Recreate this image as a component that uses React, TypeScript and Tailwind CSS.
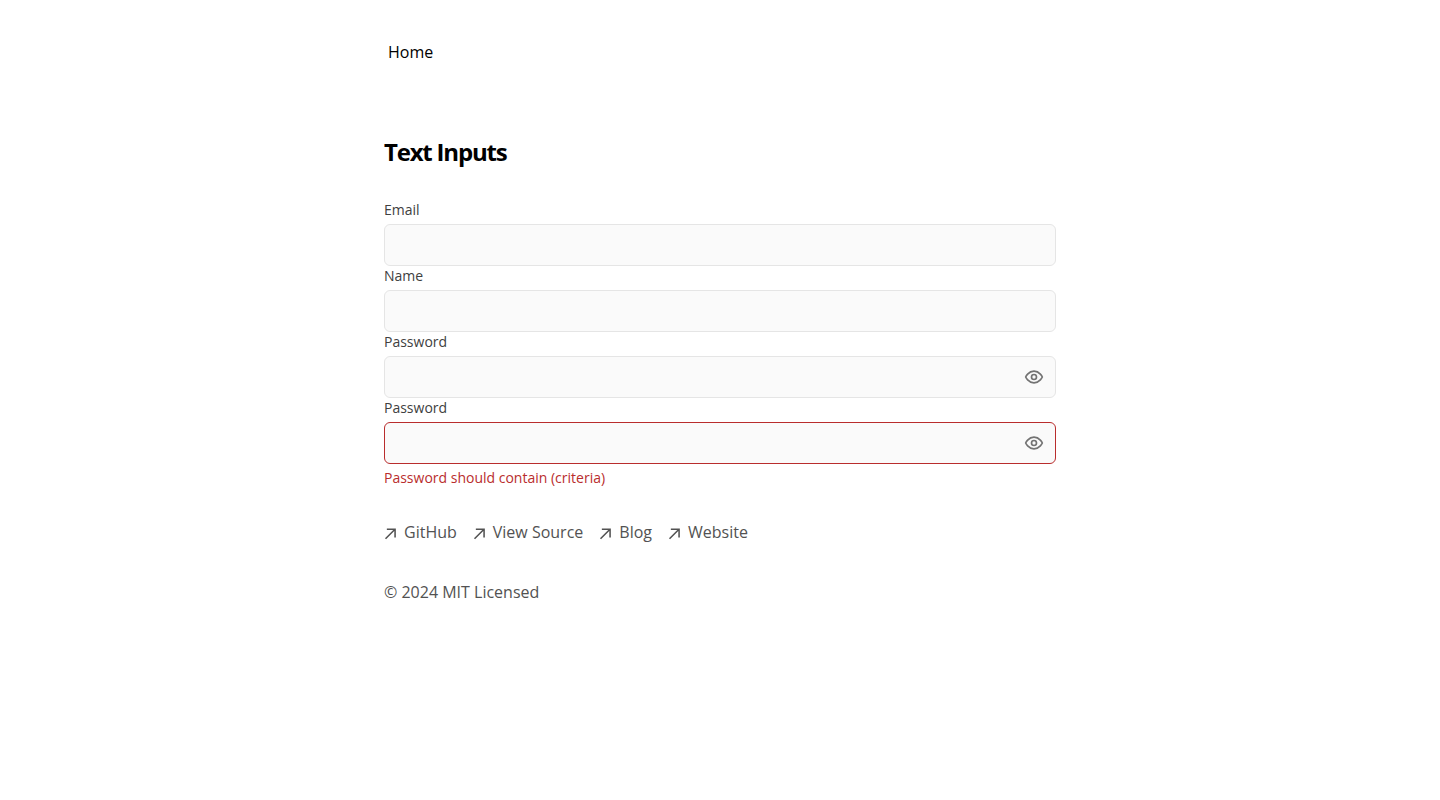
import React from 'react';

interface TextInputProps {
  id: string;
  label: string;
  type?: 'text' | 'email' | 'password';
  error?: string;
}

const links = [
  { label: 'GitHub', href: '#github' },
  { label: 'View Source', href: '#source' },
  { label: 'Blog', href: '#blog' },
  { label: 'Website', href: '#website' },
];

const ArrowIcon: React.FC = () => (
  <svg width="12" height="12" viewBox="0 0 12 12" fill="none" aria-hidden="true">
    <path
      d="M2.07102 11.3494L0.963068 10.2415L9.2017 1.98864H2.83807L2.85227 0.454545H11.8438V9.46023H10.2955L10.3097 3.09659L2.07102 11.3494Z"
      fill="currentColor"
    />
  </svg>
);

const EyeIcon: React.FC = () => (
  <svg
    width="20"
    height="20"
    viewBox="0 0 24 24"
    fill="none"
    stroke="currentColor"
    strokeWidth="2"
    strokeLinecap="round"
    strokeLinejoin="round"
    aria-hidden="true"
  >
    <path d="M2 12s3-7 10-7 10 7 10 7-3 7-10 7-10-7-10-7Z" />
    <circle cx="12" cy="12" r="3" />
  </svg>
);

const TextInput: React.FC<TextInputProps> = ({ id, label, type = 'text', error }) => {
  const [visible, setVisible] = React.useState(false);
  const isPassword = type === 'password';

  return (
    <div>
      <label htmlFor={id} className="block text-sm text-neutral-700">
        {label}
      </label>
      <div className="relative mt-1">
        <input
          id={id}
          name={id}
          type={isPassword && visible ? 'text' : type}
          aria-invalid={Boolean(error)}
          aria-describedby={error ? `${id}-error` : undefined}
          className="block w-full rounded-md border border-neutral-200 bg-neutral-50 px-3 py-2 text-base outline-none focus:border-neutral-400 aria-invalid:border-[#b92d2d]"
        />
        {isPassword && (
          <button
            type="button"
            aria-label={visible ? 'Hide password' : 'Show password'}
            onClick={() => setVisible((prev) => !prev)}
            className="absolute inset-y-0 right-3 flex items-center text-neutral-500"
          >
            <EyeIcon />
          </button>
        )}
      </div>
      {error && (
        <p id={`${id}-error`} className="mt-1 text-sm text-[#b92d2d]">
          {error}
        </p>
      )}
    </div>
  );
};

export default function App() {
  return (
    <div className="mx-4 mt-8 max-w-2xl font-['Open_Sans',sans-serif] text-black antialiased md:mx-auto">
      <nav className="-ml-2 mb-16 flex">
        <a href="#home" className="m-1 px-2 py-1">
          Home
        </a>
      </nav>

      <main>
        <h1 className="mb-8 text-2xl font-bold tracking-tighter">Text Inputs</h1>
        <form>
          <TextInput id="email" label="Email" type="email" />
          <TextInput id="name" label="Name" />
          <TextInput id="password" label="Password" type="password" />
          <TextInput
            id="new-password"
            label="Password"
            type="password"
            error="Password should contain (criteria)"
          />
        </form>
      </main>

      <footer className="mt-8 text-neutral-600">
        <ul className="flex flex-wrap gap-x-4">
          {links.map((link) => (
            <li key={link.label}>
              <a href={link.href} className="flex items-center">
                <ArrowIcon />
                <span className="ml-2 h-7">{link.label}</span>
              </a>
            </li>
          ))}
        </ul>
        <p className="mt-8">© 2024 MIT Licensed</p>
      </footer>
    </div>
  );
}
